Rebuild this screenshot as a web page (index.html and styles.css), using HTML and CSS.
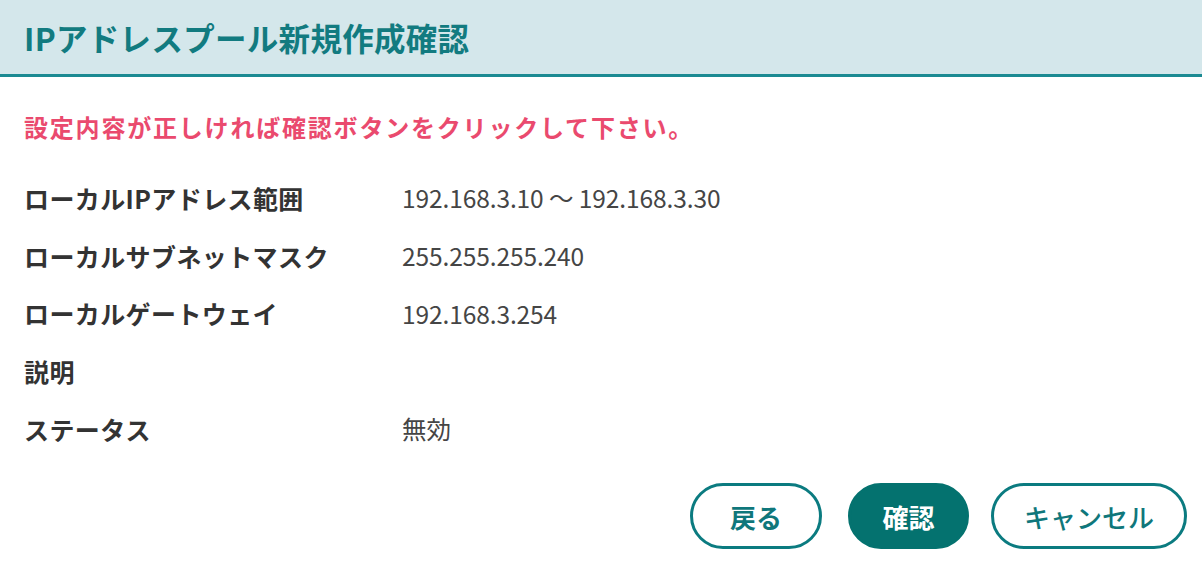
FILE: index.html
```html
<!DOCTYPE html>
<html lang="ja">
<head>
<meta charset="utf-8">
<title>IPアドレスプール新規作成確認</title>
<link rel="stylesheet" href="styles.css">
</head>
<body>
<div class="dialog">
  <header class="dialog-header">
    <h1 class="dialog-title">IPアドレスプール新規作成確認</h1>
  </header>
  <main class="dialog-body">
    <p class="notice">設定内容が正しければ確認ボタンをクリックして下さい。</p>
    <dl class="details">
      <dt>ローカルIPアドレス範囲</dt><dd>192.168.3.10 ～ 192.168.3.30</dd>
      <dt>ローカルサブネットマスク</dt><dd>255.255.255.240</dd>
      <dt>ローカルゲートウェイ</dt><dd>192.168.3.254</dd>
      <dt>説明</dt><dd></dd>
      <dt>ステータス</dt><dd>無効</dd>
    </dl>
  </main>
  <footer class="actions">
    <button class="btn btn-outline btn-back">戻る</button>
    <button class="btn btn-primary btn-confirm">確認</button>
    <button class="btn btn-outline btn-cancel">キャンセル</button>
  </footer>
</div>
</body>
</html>
```
FILE: styles.css
```css
* { box-sizing: border-box; }
html, body {
  margin: 0;
  padding: 0;
  background: #ffffff;
  font-family: "Noto Sans CJK JP", "Noto Sans", sans-serif;
}
.dialog {
  width: 1202px;
  height: 572px;
  display: flex;
  flex-direction: column;
}
.dialog-header {
  height: 77px;
  background: #d4e7eb;
  border-bottom: 3px solid #1b8a92;
  display: flex;
  align-items: center;
  padding-left: 24px;
}
.dialog-title {
  margin: 0;
  font-size: 31.5px;
  font-weight: 700;
  color: #127b80;
  line-height: 40px;
  letter-spacing: 0.3px;
}
.dialog-body {
  padding: 0 24px;
}
.notice {
  margin: 32px 0 0;
  font-size: 24px;
  line-height: 36px;
  font-weight: 700;
  color: #ea4a6e;
  letter-spacing: 1.8px;
}
.details {
  margin: 24px 0 0;
  display: grid;
  grid-template-columns: 378px 1fr;
  grid-auto-rows: 57.7px;
  align-items: center;
}
.details dt {
  font-size: 25px;
  font-weight: 700;
  color: #333333;
  letter-spacing: 0.4px;
}
.details dd {
  margin: 0;
  font-size: 24.5px;
  color: #454545;
  letter-spacing: -0.1px;
}
.actions {
  margin-top: 26px;
  display: flex;
  justify-content: flex-end;
  align-items: center;
  padding-right: 15px;
}
.btn {
  height: 66px;
  border-radius: 33px;
  font-family: inherit;
  font-size: 26px;
  font-weight: 700;
  padding: 0;
  cursor: pointer;
}
.btn-outline {
  background: #ffffff;
  border: 3px solid #0b7b80;
  color: #0f777b;
}
.btn-primary {
  background: #04726f;
  border: 3px solid #04726f;
  color: #ffffff;
}
.btn-back { width: 132px; margin-right: 26px; }
.btn-confirm { width: 121px; margin-right: 22px; }
.btn-cancel { width: 196px; font-weight: 500; }
```
